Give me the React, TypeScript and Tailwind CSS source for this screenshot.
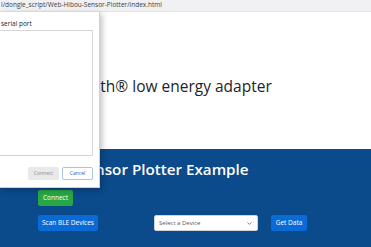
import React from 'react';
import { ChevronDown } from 'lucide-react';

const App = () => {
  return <div className="relative w-[371px] h-[247px] overflow-hidden bg-white font-['Open_Sans',sans-serif]">
      {/* Address bar */}
      <div className="h-[12px] bg-[#f1f1f3] border-b border-[#e4e4e6] flex items-center pl-[1px]">
        <span className="text-[6.5px] leading-none text-[#3c3c3c] whitespace-nowrap">l/dongle_script/Web-Hibou-Sensor-Plotter/index.html</span>
      </div>
      {/* Page heading */}
      <div className="h-[137px] pl-[44px] pt-[64px]">
        <h1 className="text-[15.5px] leading-[20px] text-[#212529] whitespace-nowrap">Bluetooth® low energy adapter</h1>
      </div>
      {/* Blue section */}
      <div className="h-[98px] bg-[#0b4a8b] pl-[38px]">
        <h2 className="-ml-[8px] pt-[10px] text-[15.2px] leading-[20px] font-semibold text-white whitespace-nowrap">Hibou Sensor Plotter Example</h2>
        <button className="mt-[11px] h-[16px] w-[35px] rounded-[2px] bg-[#28a745] text-[6.5px] text-white">Connect</button>
        <div className="mt-[9px] flex items-center">
          <button className="h-[16px] w-[60px] rounded-[2px] bg-[#0b6bd6] text-[6.5px] text-white">Scan BLE Devices</button>
          <div className="ml-[56px] h-[16px] w-[104px] rounded-[2px] bg-white border border-[#ced4da] flex items-center justify-between px-[4px]">
            <span className="text-[6px] text-[#555]">Select a Device</span>
            <ChevronDown size={7} strokeWidth={2.5} className="text-[#555]" />
          </div>
          <button className="ml-[13px] h-[16px] w-[36px] rounded-[2px] bg-[#0b6bd6] text-[6.5px] text-white">Get Data</button>
        </div>
      </div>
      {/* Serial port chooser popup */}
      <div className="absolute left-0 top-[12px] w-[100px] h-[176px] bg-white border-r border-b border-[#d0d0d0] shadow-[2px_2px_6px_rgba(0,0,0,0.25)] flex flex-col">
        <div className="h-[15px] flex items-end pl-[1px]">
          <span className="text-[6.5px] leading-none text-[#202124] whitespace-nowrap">serial port</span>
        </div>
        <div className="mt-[3px] h-[126px] w-[93px] border border-l-0 border-[#d6d6d6]"></div>
        <div className="mt-[11px] flex pl-[28px] gap-[3px]">
          <div className="h-[13px] w-[31px] rounded-[2px] bg-[#e9e9ea] text-[5px] text-[#8a8a8a] flex items-center justify-center">Connect</div>
          <div className="h-[13px] w-[31px] rounded-[2px] bg-white border border-[#a8c4ee] text-[5px] text-[#1a63c9] flex items-center justify-center">Cancel</div>
        </div>
      </div>
    </div>;
};
export default App;
